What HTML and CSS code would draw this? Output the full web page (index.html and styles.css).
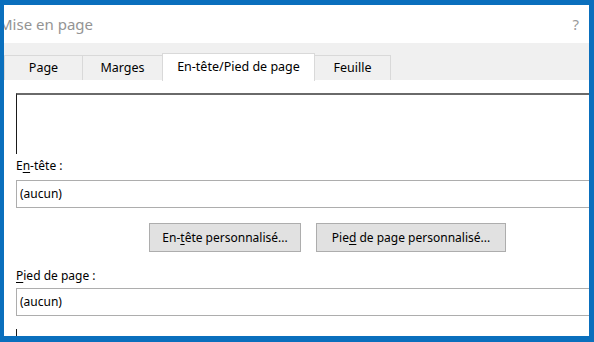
FILE: index.html
```html
<!DOCTYPE html>
<html lang="fr">
<head>
<meta charset="UTF-8">
<title>Mise en page</title>
<link rel="stylesheet" href="styles.css">
</head>
<body>
<div class="dialog">
  <div class="titlebar">
    <span class="title">Mise en page</span>
    <span class="help">?</span>
  </div>

  <div class="tabstrip">
    <div class="tab tab-page">Page</div>
    <div class="tab tab-marges">Marges</div>
    <div class="tab tab-header active">En-tête/Pied de page</div>
    <div class="tab tab-feuille">Feuille</div>
  </div>

  <div class="content">
    <div class="preview"></div>

    <div class="field-label">E<u>n</u>-tête :</div>
    <div class="select">(aucun)</div>

    <div class="buttons">
      <div class="btn btn-header">En-<u>t</u>ête personnalisé...</div>
      <div class="btn btn-footer">Pie<u>d</u> de page personnalisé...</div>
    </div>

    <div class="field-label footer-label"><u>P</u>ied de page :</div>
    <div class="select select-footer">(aucun)</div>

    <div class="preview preview-bottom"></div>
  </div>
</div>
</body>
</html>
```

FILE: styles.css
```css
body {
  margin: 0;
  background: #ffffff;
  font-family: "Noto Sans", "Open Sans", sans-serif;
}
.dialog {
  width: 594px;
  height: 342px;
  box-sizing: border-box;
  border-style: solid;
  border-color: #0a6fbd;
  border-width: 5px 5px 6px 4px;
  background: #ffffff;
  overflow: hidden;
}
.titlebar {
  height: 38px;
  display: flex;
  align-items: center;
  justify-content: space-between;
  padding-right: 10px;
}
.title {
  margin-left: -5px;
  font-size: 15px;
  color: #949494;
}
.help {
  font-size: 15px;
  color: #9a9a9a;
}
.tabstrip {
  height: 37px;
  box-sizing: border-box;
  background: #f0f0f0;
  display: flex;
  align-items: flex-end;
}
.tab {
  height: 25px;
  box-sizing: border-box;
  border: 1px solid #d9d9d9;
  border-bottom: none;
  background: #f0f0f0;
  font-size: 12.5px;
  line-height: 23px;
  text-align: center;
  color: #000;
  margin-right: -1px;
}
.tab-page { width: 79px; }
.tab-marges { width: 81px; }
.tab-header { width: 153px; }
.tab-feuille { width: 77px; }
.tab.active {
  position: relative;
  z-index: 1;
  height: 28px;
  line-height: 25px;
  margin-bottom: -1px;
  background: #ffffff;
}
.content {
  padding: 13px 0 0 12px;
}
.preview {
  height: 61px;
  width: 600px;
  box-sizing: border-box;
  border-top: 2px solid #6a6a6a;
  border-left: 1px solid #1a1a1a;
}
.field-label {
  margin-top: 4px;
  height: 16px;
  line-height: 16px;
  font-size: 12px;
  color: #000;
}
.select {
  margin-top: 6px;
  width: 600px;
  height: 28px;
  box-sizing: border-box;
  border: 1px solid #adadad;
  padding-left: 3px;
  font-size: 12px;
  line-height: 26px;
  color: #000;
}
.buttons {
  display: flex;
  gap: 15px;
  margin: 15px 0 0 133px;
}
.btn {
  height: 29px;
  box-sizing: border-box;
  border: 1px solid #adadad;
  background: #e1e1e1;
  font-size: 12px;
  line-height: 27px;
  text-align: center;
}
.btn-header { width: 152px; }
.btn-footer { width: 190px; }
.footer-label {
  margin-top: 16px;
}
.select-footer {
  margin-top: 4px;
}
.preview-bottom {
  margin-top: 13px;
  border-top: none;
}
u {
  text-underline-offset: 2px;
}
```
